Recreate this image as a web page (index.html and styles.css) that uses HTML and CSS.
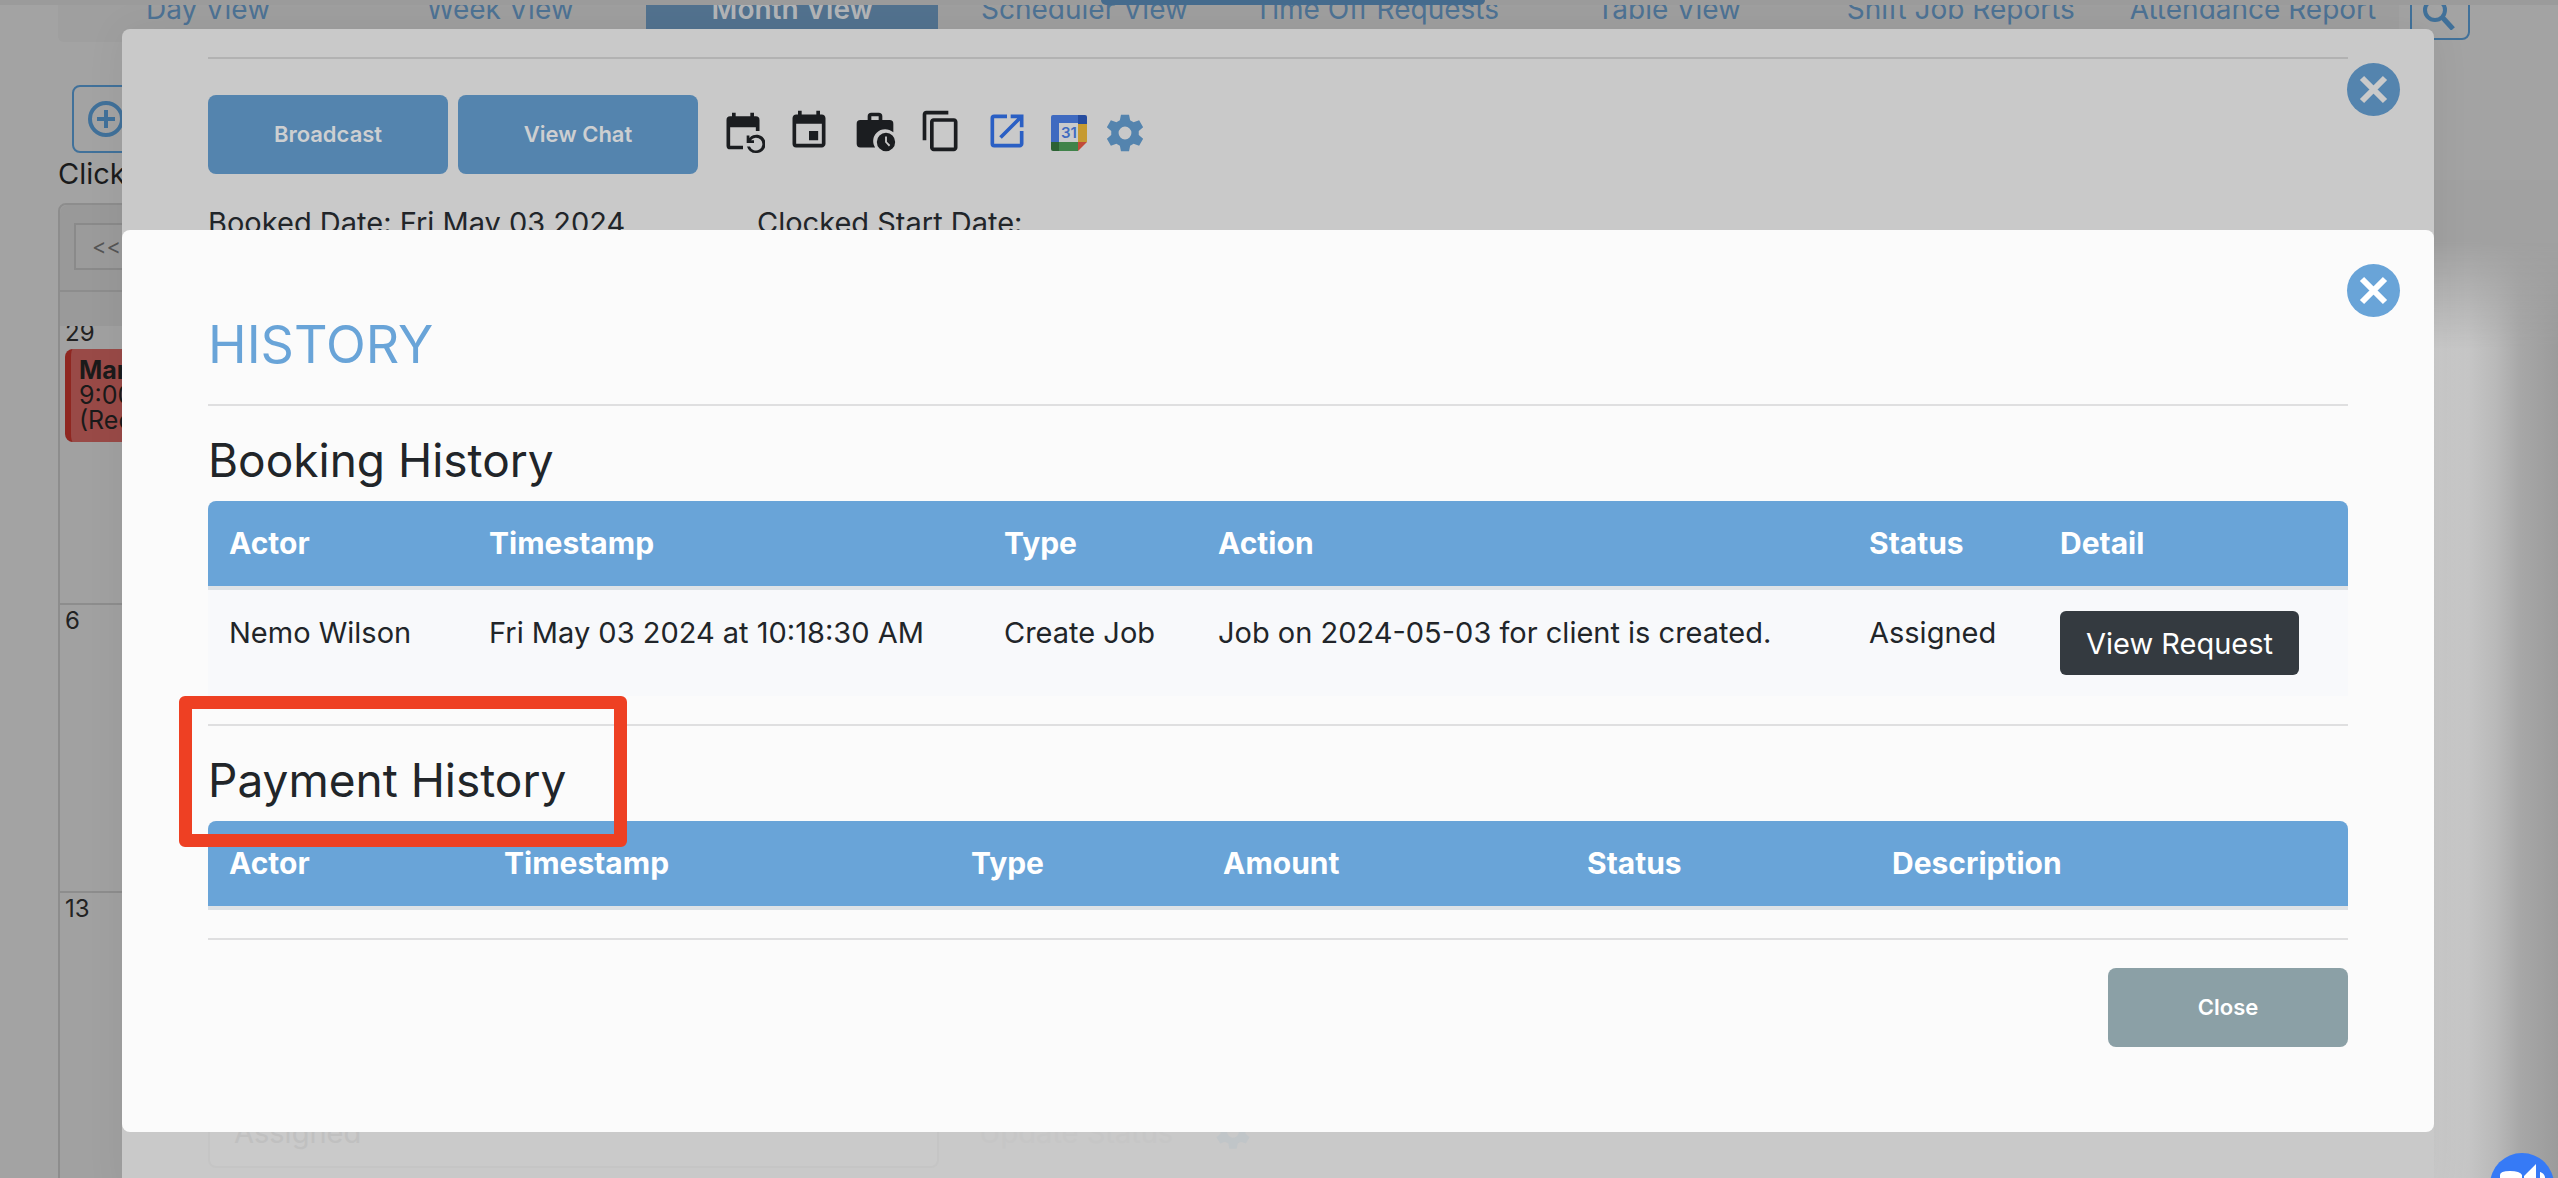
FILE: index.html
```html
<!DOCTYPE html>
<html lang="en">
<head>
<meta charset="utf-8">
<title>Booking history</title>
<link rel="stylesheet" href="styles.css">
</head>
<body>
<header class="topbar"><span class="pill"></span></header>

<main class="page">
  <div class="nav-row">
    <nav class="tabs">
      <a href="#">Day View</a>
      <a href="#">Week View</a>
      <a href="#" class="active">Month View</a>
      <a href="#">Scheduler View</a>
      <a href="#">Time Off Requests</a>
      <a href="#">Table View</a>
      <a href="#">Shift Job Reports</a>
      <a href="#">Attendance Report</a>
    </nav>
    <button class="search" aria-label="Search">
      <svg viewBox="0 0 32 32" width="32" height="32" fill="none" stroke="currentColor"><circle cx="12" cy="12" r="10" stroke-width="4"/><path d="M20 20l10 11" stroke-width="5"/></svg>
    </button>
  </div>
  <button class="add" aria-label="Add">
    <svg viewBox="0 0 36 36" width="36" height="36" fill="none" stroke="currentColor" stroke-width="4"><circle cx="18" cy="18" r="16"/><path d="M18 9v18M9 18h18"/></svg>
  </button>
  <p class="hint">Click</p>
  <section class="calendar">
    <div class="cal-tools"><button>&lt;&lt;</button></div>
    <div class="cal-head"></div>
    <div class="weeks">
      <div class="week">
        <span class="day">29</span>
        <div class="event"><b>Mar</b><br>9:00<br>(Req</div>
      </div>
      <div class="week"><span class="day">6</span></div>
      <div class="week"><span class="day">13</span></div>
    </div>
  </section>
</main>

<div class="edge-veil"></div>
<div class="edge-glow"></div>

<section class="modal modal-job">
  <button class="dismiss" aria-label="Close job">
    <svg viewBox="0 0 53 53" width="53" height="53"><path d="M15 15l23 23M38 15L15 38" stroke="currentColor" stroke-width="6"/></svg>
  </button>
  <hr>
  <div class="job-actions">
    <button class="btn">Broadcast</button>
    <button class="btn">View Chat</button>
    <div class="icons">
      <svg viewBox="0 0 24 24"><path fill="currentColor" d="M5 22a2 2 0 0 1-2-2V6a2 2 0 0 1 2-2h1V2h2v2h8V2h2v2h1a2 2 0 0 1 2 2v6h-2v-2H5v10h7v2zm14 2a5 5 0 0 1-4.800-3.600h1.600a3.500 3.500 0 1 0 .500-3.400H18V18.500h-4v-4h1.500v1.300A5 5 0 1 1 19 24z"/></svg>
      <svg viewBox="0 0 24 24"><path fill="currentColor" d="M17 12h-5v5h5v-5zM16 1v2H8V1H6v2H5c-1.110 0-1.990.900-1.990 2L3 19a2 2 0 0 0 2 2h14c1.100 0 2-.900 2-2V5c0-1.100-.900-2-2-2h-1V1h-2zm3 18H5V8h14v11z"/></svg>
      <svg viewBox="0 0 24 24"><path fill="currentColor" fill-rule="evenodd" d="M11 17.500A6.500 6.500 0 0 1 17.500 11c1.600 0 3.100.600 4.500 1.700V8a2 2 0 0 0-2-2h-4V4a2 2 0 0 0-2-2h-4a2 2 0 0 0-2 2v2H4a2 2 0 0 0-2 2v11a2 2 0 0 0 2 2h8.100c-.700-1-1.100-2.200-1.100-3.500zM10 4h4v2h-4z"/><path fill="currentColor" fill-rule="evenodd" d="M18 13a5 5 0 1 0 0 10 5 5 0 0 0 0-10zm1.600 7.400L17.500 18.200V15h1v2.800l1.800 1.900z"/></svg>
      <svg viewBox="0 0 24 24"><path fill="currentColor" d="M16 1H4c-1.100 0-2 .900-2 2v14h2V3h12V1zm3 4H8c-1.100 0-2 .900-2 2v14c0 1.100.900 2 2 2h11c1.100 0 2-.900 2-2V7c0-1.100-.900-2-2-2zm0 16H8V7h11v14z"/></svg>
      <svg viewBox="0 0 24 24" class="open"><path fill="currentColor" d="M19 19H5V5h7V3H5a2 2 0 0 0-2 2v14a2 2 0 0 0 2 2h14c1.100 0 2-.900 2-2v-7h-2v7zM14 3v2h3.590l-9.830 9.830 1.410 1.410L19 6.410V10h2V3h-7z"/></svg>
    </div>
    <div class="icons-small">
      <svg viewBox="0 0 36 36" class="gcal">
        <rect x="8" y="8" width="20" height="20" fill="#c9cacb"/>
        <path d="M2 0h26v8H8v20H0V2a2 2 0 0 1 2-2z" fill="#3f6ac0"/>
        <path d="M27 0h7a2 2 0 0 1 2 2v7h-9z" fill="#264c9f"/>
        <path d="M27 9h9v18h-9z" fill="#c69a30"/>
        <path d="M8 27h19v9H8z" fill="#40834a"/>
        <path d="M0 27h8v9H2a2 2 0 0 1-2-2z" fill="#2c6233"/>
        <path d="M27 27h9l-9 9z" fill="#c14a38"/>
        <text x="18" y="23" text-anchor="middle">31</text>
      </svg>
      <svg viewBox="0 0 24 24" class="gear"><path id="gear" fill="currentColor" fill-rule="evenodd" d="M9.800 2h4.400l.600 3.100 1.900 1.100 3-1.100 2.200 3.800-2.400 2v2.200l2.400 2-2.200 3.800-3-1.100-1.900 1.100-.600 3.100H9.800l-.600-3.100-1.900-1.100-3 1.100-2.200-3.800 2.400-2v-2.200l-2.400-2 2.200-3.800 3 1.100 1.900-1.100zM12 8.500a3.500 3.500 0 1 0 0 7 3.500 3.500 0 0 0 0-7z"/></svg>
    </div>
  </div>
  <div class="job-dates"><span>Booked Date: Fri May 03 2024</span><span>Clocked Start Date:</span></div>
  <div class="job-status">
    <select aria-label="Status"><option>Assigned</option></select>
    <button>Update Status</button>
    <svg viewBox="0 0 24 24" width="40" height="40"><use href="#gear"/></svg>
  </div>
</section>

<section class="modal modal-history" role="dialog" aria-labelledby="history-title">
  <button class="dismiss" aria-label="Close history">
    <svg viewBox="0 0 53 53" width="53" height="53"><path d="M15 15l23 23M38 15L15 38" stroke="currentColor" stroke-width="6"/></svg>
  </button>
  <h2 id="history-title">HISTORY</h2>
  <hr>
  <h3>Booking History</h3>
  <table class="booking">
    <colgroup><col><col><col><col><col><col></colgroup>
    <thead><tr><th>Actor</th><th>Timestamp</th><th>Type</th><th>Action</th><th>Status</th><th>Detail</th></tr></thead>
    <tbody><tr><td>Nemo Wilson</td><td>Fri May 03 2024 at 10:18:30 AM</td><td>Create Job</td><td>Job on 2024-05-03 for client is created.</td><td>Assigned</td><td><button class="view">View Request</button></td></tr></tbody>
  </table>
  <div class="payment-block">
    <hr>
    <h3>Payment History</h3>
    <table class="payment">
      <colgroup><col><col><col><col><col><col></colgroup>
      <thead><tr><th>Actor</th><th>Timestamp</th><th>Type</th><th>Amount</th><th>Status</th><th>Description</th></tr></thead>
    </table>
    <div class="callout"></div>
  </div>
  <hr>
  <footer><button class="btn close">Close</button></footer>
</section>

<button class="chat" aria-label="Announcements">
  <svg viewBox="0 0 64 64" width="64" height="64" fill="currentColor"><path d="M10 22q0-4 10-4t12 4v20H10zM34 23l12-12v34L34 36zM50 19q4 1 5 5v12h-5z"/></svg>
</button>
</body>
</html>
```
FILE: styles.css
```css
* { box-sizing: border-box; }

body {
  margin: 0;
  height: 100vh;
  position: relative;
  overflow: hidden;
  background: #a3a3a3;
  color: #212529;
  font: 29px/43px Inter, "Liberation Sans", sans-serif;
}

button, select { font: inherit; margin: 0; padding: 0; border: 0; cursor: pointer; }
svg { display: block; }
hr { margin: 0; border: 0; height: 2px; background: #dfdfe0; }

/* page behind the dialogs */
.topbar {
  position: relative;
  z-index: 1;
  display: flex;
  justify-content: center;
  height: 5px;
  background: #9b9b9b;
}
.pill { width: 384px; margin-left: 28px; background: #456b8d; border-radius: 0 0 10px 10px; }

.page { margin-top: -31px; padding: 0 88px 0 58px; }
.nav-row { display: flex; gap: 11px; }
.tabs {
  flex: 1;
  display: flex;
  height: 68px;
  padding: 0 0 0 4px;
  background: #9f9f9f;
  border-radius: 6px;
}
.tabs a {
  flex: 1 1 0;
  text-align: center;
  font-size: 28px;
  line-height: 70px;
  white-space: nowrap;
  color: #4d7294;
  text-decoration: none;
}
.tabs .active { background: #52728f; color: #b3b5b7; font-weight: 600; }
.search {
  width: 60px;
  height: 66px;
  padding: 14px 0 0 11px;
  border: 2px solid #41719a;
  border-radius: 8px;
  background: none;
  color: #41719a;
}
.add {
  display: block;
  width: 160px;
  height: 68px;
  margin: 43px 0 3px 14px;
  padding-left: 14px;
  border: 2px solid #41719a;
  border-radius: 8px;
  background: none;
  color: #41719a;
}
.hint { margin: 0 0 11px; line-height: 36px; color: #1a1b1c; }

.calendar { border: 2px solid #8d8d8d; border-radius: 8px 8px 0 0; background: #a1a1a1; }
.cal-tools { height: 87px; padding: 18px 14px; background: #999; border-bottom: 2px solid #8d8d8d; border-radius: 8px 8px 0 0; }
.cal-tools button {
  display: block;
  width: 80px;
  height: 47px;
  padding-left: 16px;
  border: 2px solid #8a8a8a;
  background: #9b9b9b;
  color: #555;
  font-size: 22px;
  text-align: left;
}
.cal-head { height: 34px; background: #9a9a9a; }
.weeks { overflow: hidden; }
.week { height: 288px; padding: 0 5px; border-top: 2px solid #8d8d8d; }
.week:first-child { margin-top: -11px; }
.day { display: block; font-size: 24px; line-height: 32px; color: #222; }
.event {
  width: 200px;
  height: 93px;
  padding: 9px 8px;
  border-left: 6px solid #8f2721;
  border-radius: 8px;
  background: #994a47;
  color: #1a1a1a;
  font-size: 25px;
  line-height: 25px;
}

.edge-veil { position: absolute; inset: 180px 0 0 auto; width: 124px; background: #a1a1a1; }
.edge-glow {
  position: absolute;
  inset: 240px 0 0 auto;
  width: 124px;
  background: linear-gradient(90deg, #cbcbcb, #c5c5c5 28%, #b9b9b9 50%, #a7a7a7 70%, #9b9b9b);
  -webkit-mask-image: linear-gradient(transparent, #000 110px);
  mask-image: linear-gradient(transparent, #000 110px);
}

/* dialogs */
.modal {
  position: absolute;
  left: 122px;
  right: 124px;
  padding: 0 86px;
  border-radius: 8px;
}
.modal-job { top: 29px; bottom: -20px; padding-top: 28px; background: #c9c9c9; box-shadow: 0 0 40px #0000000f; }
.modal-history { top: 230px; padding-top: 84px; padding-bottom: 85px; background: #fbfbfb; }

.dismiss {
  position: absolute;
  top: 34px;
  right: 34px;
  width: 53px;
  height: 53px;
  border-radius: 50%;
  background: #69a4d8;
  color: #fff;
}
.modal-job .dismiss { background: #5484ae; color: #cacaca; }
.modal-job hr { background: #b2b2b2; }

.btn {
  width: 240px;
  height: 79px;
  border-radius: 8px;
  background: #5484ae;
  color: #cdcfd1;
  font-size: 22px;
  font-weight: 600;
}
.job-actions { display: flex; gap: 10px; margin-top: 36px; height: 79px; }
.icons { display: flex; gap: 22px; padding: 14px 0 0 13px; color: #1b1d20; }
.icons svg, .gear { width: 44px; height: 44px; }
.icons .open { color: #2a5fc4; }
.icons-small { display: flex; align-items: center; gap: 16px; padding-left: 12px; height: 76px; }
.gcal { width: 36px; height: 36px; }
.gcal text { font: 600 15px Inter, sans-serif; fill: #3f6ac0; }
.gear { color: #5484ae; }
.job-dates { display: flex; margin-top: 27px; }
.job-dates span:first-child { width: 549px; }
.job-status { display: flex; gap: 40px; align-items: center; margin-top: 852px; }
.job-status select {
  appearance: none;
  width: 731px;
  height: 72px;
  padding: 0 24px;
  border: 2px solid #c5c5c5;
  border-radius: 8px;
  background: #cacaca;
  color: #c0c0c0;
}
.job-status button { background: none; color: #c6c6c6; }
.job-status svg { color: #c0c5c8; }

h2 { margin: 0 0 28px; font-size: 52px; line-height: 62px; font-weight: 400; color: #69a4d8; }
h3 { margin: 28px 0 15px; font-size: 46px; line-height: 52px; font-weight: 400; }

table { width: 100%; table-layout: fixed; border-collapse: separate; border-spacing: 0; margin-bottom: 28px; }
th, td { padding: 21px; text-align: left; vertical-align: top; white-space: nowrap; }
th { background: #69a4d8; color: #fff; font-size: 30px; font-weight: 700; border-bottom: 4px solid #dee2e6; }
th:first-child { border-top-left-radius: 8px; }
th:last-child { border-top-right-radius: 8px; }
td { background: #f8f9fb; }

.booking col:nth-child(1) { width: 260px; }
.booking col:nth-child(2) { width: 515px; }
.booking col:nth-child(3) { width: 214px; }
.booking col:nth-child(4) { width: 651px; }
.booking col:nth-child(5) { width: 191px; }
.booking col:nth-child(6) { width: 309px; }
.payment col:nth-child(1) { width: 275px; }
.payment col:nth-child(2) { width: 467px; }
.payment col:nth-child(3) { width: 252px; }
.payment col:nth-child(4) { width: 364px; }
.payment col:nth-child(5) { width: 305px; }
.payment col:nth-child(6) { width: 477px; }

.view { display: block; width: 239px; height: 64px; border-radius: 6px; background: #343a40; color: #fff; }
.payment-block { position: relative; }
.callout {
  position: absolute;
  top: -28px;
  left: -29px;
  width: 448px;
  height: 151px;
  border: 13px solid #ee4023;
  border-radius: 6px;
}
footer { display: flex; justify-content: flex-end; padding-top: 28px; }
.close { background: #8ba0a6; color: #fff; }

.chat {
  position: absolute;
  right: 4px;
  bottom: -39px;
  width: 64px;
  height: 64px;
  border-radius: 50%;
  background: #367af6;
  color: #fff;
}
```
